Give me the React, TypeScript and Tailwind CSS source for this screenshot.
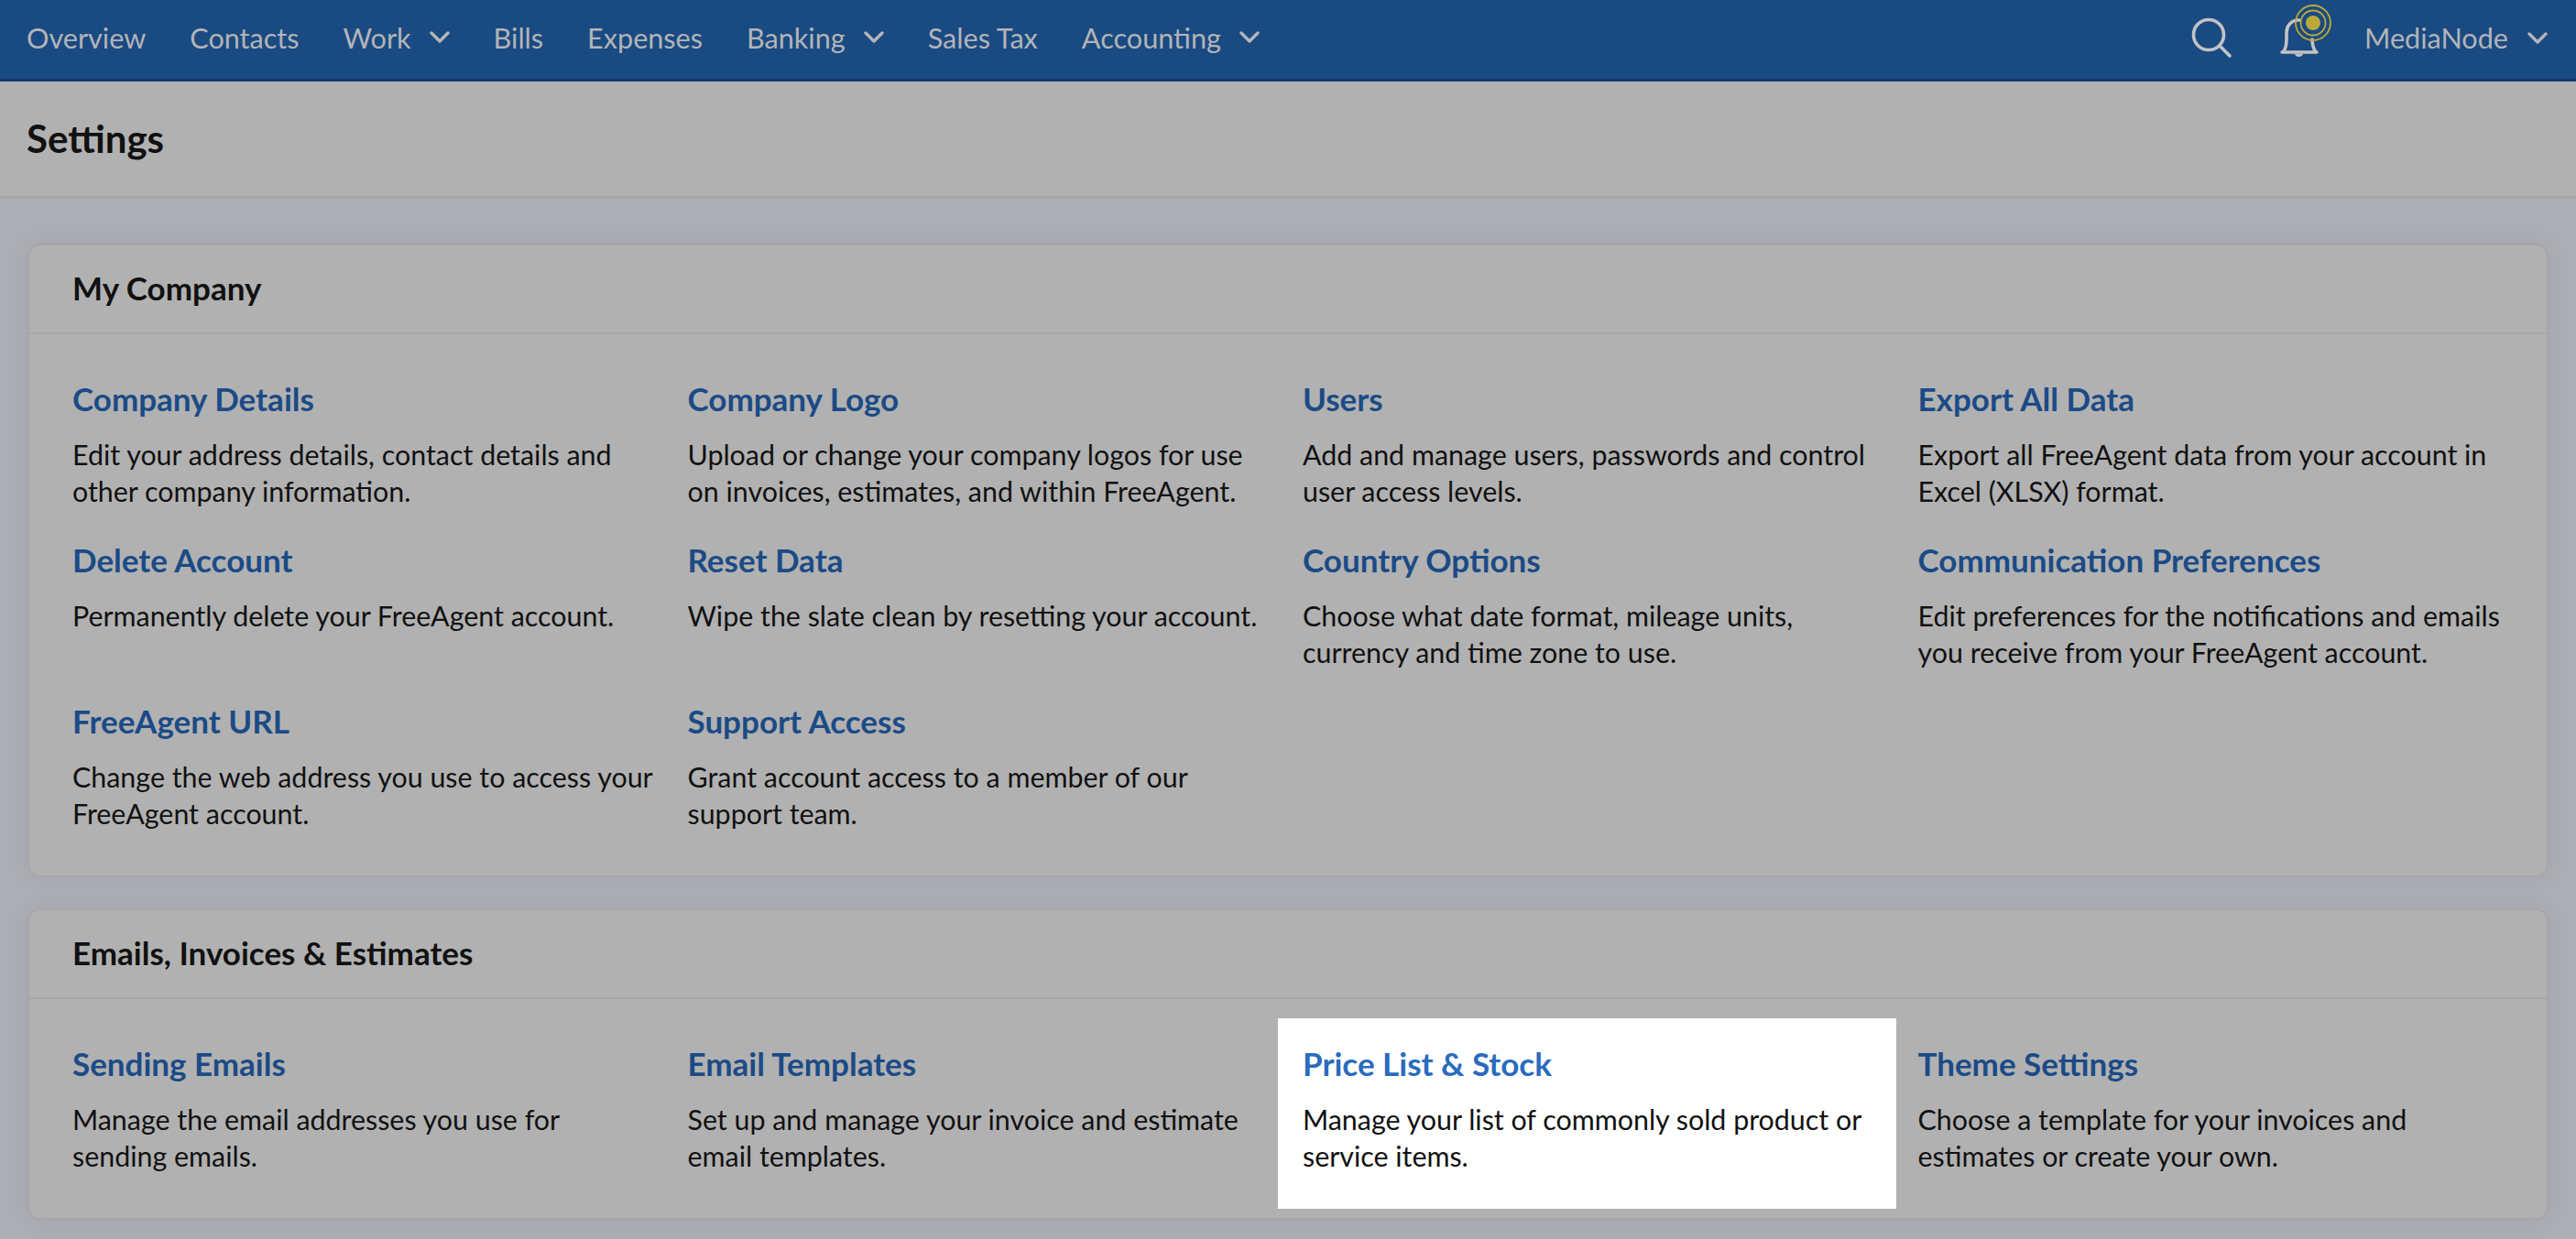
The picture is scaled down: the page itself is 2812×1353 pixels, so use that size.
import React from 'react';

type Item = { title: string; lines: string[]; active?: boolean };

const company: Item[] = [
  { title: 'Company Details', lines: ['Edit your address details, contact details and', 'other company information.'] },
  { title: 'Company Logo', lines: ['Upload or change your company logos for use', 'on invoices, estimates, and within FreeAgent.'] },
  { title: 'Users', lines: ['Add and manage users, passwords and control', 'user access levels.'] },
  { title: 'Export All Data', lines: ['Export all FreeAgent data from your account in', 'Excel (XLSX) format.'] },
  { title: 'Delete Account', lines: ['Permanently delete your FreeAgent account.'] },
  { title: 'Reset Data', lines: ['Wipe the slate clean by resetting your account.'] },
  { title: 'Country Options', lines: ['Choose what date format, mileage units,', 'currency and time zone to use.'] },
  { title: 'Communication Preferences', lines: ['Edit preferences for the notifications and emails', 'you receive from your FreeAgent account.'] },
  { title: 'FreeAgent URL', lines: ['Change the web address you use to access your', 'FreeAgent account.'] },
  { title: 'Support Access', lines: ['Grant account access to a member of our', 'support team.'] },
];

const emails: Item[] = [
  { title: 'Sending Emails', lines: ['Manage the email addresses you use for', 'sending emails.'] },
  { title: 'Email Templates', lines: ['Set up and manage your invoice and estimate', 'email templates.'] },
  { title: 'Price List & Stock', lines: ['Manage your list of commonly sold product or', 'service items.'], active: true },
  { title: 'Theme Settings', lines: ['Choose a template for your invoices and', 'estimates or create your own.'] },
];

const nav = [
  { label: 'Overview' },
  { label: 'Contacts' },
  { label: 'Work', menu: true },
  { label: 'Bills' },
  { label: 'Expenses' },
  { label: 'Banking', menu: true },
  { label: 'Sales Tax' },
  { label: 'Accounting', menu: true },
];

const Chevron = () => (
  <svg width="22" height="14" viewBox="0 0 22 14" fill="none" stroke="#b4b6b9" strokeWidth="3.4" strokeLinecap="round" strokeLinejoin="round">
    <path d="M2 2l9 9 9-9" />
  </svg>
);

const Setting = ({ item }: { item: Item }) => (
  <div className={item.active ? 'bg-white -ml-[27px] pl-[27px] mr-[24px] -mt-[27px] pt-[27px] h-[208px]' : 'h-[176px]'}>
    <a className={`block text-[35px] leading-[45px] font-bold ${item.active ? 'text-[#2a6bbd]' : 'text-[#1b4b86]'}`}>{item.title}</a>
    <p className="mt-[18px] text-[30.4px] leading-[40px] text-[#111111]">
      {item.lines.map((l) => (
        <span key={l} className="block whitespace-nowrap">{l}</span>
      ))}
    </p>
  </div>
);

const Panel = ({ title, items, className }: { title: string; items: Item[]; className: string }) => (
  <section className={`rounded-[14px] border-2 border-[#a6a7ab] bg-[#b1b1b1] shadow-[0_0_24px_rgba(0,0,0,0.05)] ${className}`}>
    <h2 className="h-[97px] border-b-2 border-[#a6a7ab] pl-[47px] text-[35px] leading-[92px] font-bold text-[#111111]">{title}</h2>
    <div className="grid grid-cols-4 pl-[47px] pr-[15px] pt-[48px]">
      {items.map((item) => (
        <Setting key={item.title} item={item} />
      ))}
    </div>
  </section>
);

export default function App() {
  return (
    <div className="min-h-[1353px] bg-[#acaeb3] font-['Lato',sans-serif]">
      <nav className="flex h-[89px] items-center justify-between border-b-[3px] border-[#14396a] bg-[#1a4a82] pb-[3px] pl-[29px] pr-[31px] text-[30.6px] text-[#b2b4b7]">
        <div className="flex items-center gap-[48px]">
          {nav.map((n) => (
            <a key={n.label} className="flex items-center gap-[20px]">
              {n.label}
              {n.menu && <Chevron />}
            </a>
          ))}
        </div>
        <div className="flex items-center">
          <svg width="46" height="46" viewBox="0 0 46 46" fill="none" stroke="#c2c3c5" strokeWidth="3.6" strokeLinecap="round">
            <circle cx="19" cy="19" r="16.5" />
            <path d="M31 31l11 11" />
          </svg>
          <svg className="ml-[49px] -mt-[14px]" width="60" height="63" viewBox="0 0 60 63" fill="none">
            <path d="M4 54h38M5 54c3-3 4-7 4-14v-7c0-8 5-13 11-14h3M37 40c0 6 2 11 4 14" stroke="#c2c3c5" strokeWidth="3.6" strokeLinecap="round" strokeLinejoin="round" />
            <path d="M18 56c1 4 8 4 9 0z" fill="#c2c3c5" />
            <circle cx="38" cy="22" r="8" fill="#b9a93a" />
            <circle cx="38" cy="22" r="13.500" stroke="#b9a93a" strokeWidth="1.800" />
            <circle cx="38" cy="22" r="19" stroke="#b9a93a" strokeWidth="1.800" />
          </svg>
          <span className="ml-[34px]">MediaNode</span>
          <span className="ml-[21px]"><Chevron /></span>
        </div>
      </nav>
      <header className="h-[128px] border-b-[3px] border-[#a6a7a8] bg-[#b1b1b1] pl-[29px] text-[42px] leading-[124px] font-bold text-[#111111]">Settings</header>
      <main className="px-[30px]">
        <Panel title="My Company" items={company} className="mt-[49px] h-[692px]" />
        <Panel title="Emails, Invoices & Estimates" items={emails} className="mt-[34px] h-[340px]" />
      </main>
    </div>
  );
}
